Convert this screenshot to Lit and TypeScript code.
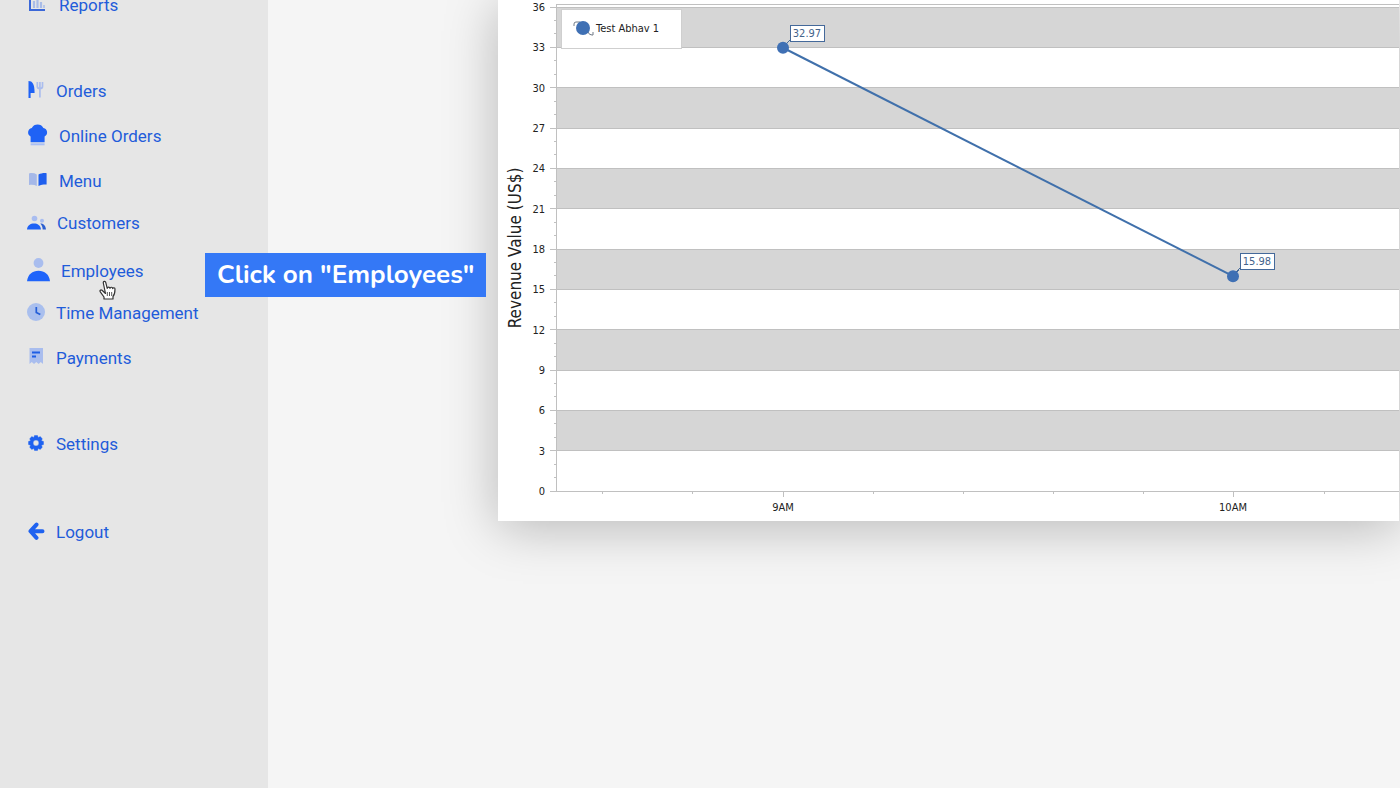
import { LitElement, html, svg, css } from "lit";
import { customElement } from "lit/decorators.js";

const icons: Record<string, unknown> = {
  reports: svg`<svg width="21" height="20" viewBox="0 0 21 20"><path d="M3 0v15h15" fill="none" stroke="#3b68d8" stroke-width="2"/><path d="M7 6v7M10.500 3v10M14 7v6" stroke="#a9bce8" stroke-width="2.200"/><path d="M17 10v3" stroke="#a9bce8" stroke-width="1.500"/></svg>`,
  orders: svg`<svg width="18" height="20" viewBox="0 0 18 20"><path d="M1.500 0C5.500 0 7.600 3 7.600 12H3.600v5H1.500z" fill="#1f62f5"/><path d="M10.300 1v4.500c0 1.300 1 2 2.600 2s2.600-.7 2.600-2V1M12.900 1v15.500" fill="none" stroke="#aabdee" stroke-width="1.700"/></svg>`,
  online: svg`<svg width="21" height="24" viewBox="0 0 21 24"><path d="M3.600 18.300V12.600A4.600 4.600 0 0 1 4.800 4a6.600 6.600 0 0 1 11.600 0 4.600 4.600 0 0 1 1.200 8.600v5.700z" fill="#1f62f5"/><path d="M3.600 19.300h14v2h-14z" fill="#aabff4"/></svg>`,
  menu: svg`<svg width="21" height="18" viewBox="0 0 21 18"><path d="M2 1.500c3-.8 5.500-.3 7.800.9V14C7.500 12.800 5 12.400 2 13z" fill="#a5b8e8"/><path d="M11.500 2.600C14 1.200 17 .8 19.600 1.200v11.300c-3-.1-5.500.3-8.100 1.500z" fill="#1f5fee"/></svg>`,
  customers: svg`<svg width="19" height="18" viewBox="0 0 19 18"><circle cx="7.500" cy="4.500" r="2.800" fill="#a9bdf0"/><circle cx="15" cy="6.800" r="2" fill="#a9bdf0"/><path d="M0 15.500c.3-4.300 3.500-6 7-6s6.500 1.700 7 6z" fill="#1f62f5"/><path d="M13.300 9.600c3 0 5.300 1.800 5.700 5.900h-3.300c-.2-2.800-1-4.300-2.400-5.900z" fill="#2c5fd0"/></svg>`,
  employees: svg`<svg width="23" height="26" viewBox="0 0 23 26"><circle cx="11.500" cy="5" r="4.900" fill="#a9bdee"/><path d="M0 23.300c.8-7 5.500-10.500 11.500-10.500S22.200 16.300 23 23.300z" fill="#1f64fa"/></svg>`,
  time: svg`<svg width="18" height="20" viewBox="0 0 18 20"><circle cx="9" cy="9" r="9" fill="#a9bfee"/><path d="M9.300 4v5.500l4 2" fill="none" stroke="#245ed8" stroke-width="1.700"/></svg>`,
  payments: svg`<svg width="18" height="20" viewBox="0 0 18 20"><path d="M2.500 0h13.500v16l-2.200-2-2.200 2-2.300-2L7 16l-2.200-2-2.300 2z" fill="#a9bdee"/><path d="M5 4.500h8M5 8.500h4" stroke="#1f5ee5" stroke-width="2"/></svg>`,
  settings: svg`<svg width="18" height="20" viewBox="0 0 18 20"><path fill-rule="evenodd" stroke="#1f62f0" stroke-width=".4" stroke-linejoin="round" fill="#1f62f0" d="M7.500 1.500h3l.7 2 2-.9 2.100 2.100-.9 2 2.100.7v3.200l-2.100.7.9 2-2.100 2.100-2-.9-.7 2h-3l-.7-2-2 .9-2.100-2.100.9-2-2.100-.7V7.400l2.100-.7-.9-2 2.100-2.100 2 .9zM9 6.100a2.900 2.900 0 1 0 0 5.800 2.900 2.900 0 0 0 0-5.800z"/></svg>`,
  logout: svg`<svg width="18" height="20" viewBox="0 0 18 20"><path d="M9.500 2.600L3.500 9.200l6 6.600M4 9.200h11.500" fill="none" stroke="#1f62f0" stroke-width="4" stroke-linecap="round" stroke-linejoin="round"/></svg>`,
};

type Item = { id: string; label: string; space: string };
const items: Item[] = [
  { id: "reports", label: "Reports", space: "first" },
  { id: "orders", label: "Orders", space: "section" },
  { id: "online", label: "Online Orders", space: "mid" },
  { id: "menu", label: "Menu", space: "mid" },
  { id: "customers", label: "Customers", space: "tight" },
  { id: "employees", label: "Employees", space: "wide" },
  { id: "time", label: "Time Management", space: "tight" },
  { id: "payments", label: "Payments", space: "mid" },
  { id: "settings", label: "Settings", space: "section" },
  { id: "logout", label: "Logout", space: "last" },
];

@customElement("side-nav")
class SideNav extends LitElement {
  static styles = css`
    :host { display: block; }
    nav { display: flex; flex-direction: column; margin-top: -7px; }
    .row { position: relative; display: flex; height: 24px; padding-left: 27px; }
    .section { margin-top: 62px; }
    .last { margin-top: 64px; }
    .mid { margin-top: 21px; }
    .tight { margin-top: 18px; }
    .wide { margin-top: 24px; }
    a { display: flex; align-items: center; gap: 11px; color: #1f5cda; text-decoration: none; font: 17px/24px Roboto, sans-serif; white-space: nowrap; }
    a svg { display: block; flex: none; }
    .tip { position: absolute; left: 205px; top: -6px; z-index: 2; box-sizing: border-box; height: 44px; padding: 0 12px; background: #3478f6; color: #fff; font: 700 26px/44px Nunito, "Open Sans", sans-serif; white-space: nowrap; }
    .hand { position: absolute; left: 99px; top: 21px; z-index: 2; }
  `;
  render() {
    return html`<nav>${items.map((i) => html`
      <div class="row ${i.space}">
        <a href="#${i.id}">${icons[i.id]}<span>${i.label}</span></a>
        ${i.id === "employees" ? html`
          <div class="tip" role="tooltip">Click on "Employees"</div>
          <svg class="hand" width="18" height="20" viewBox="0 0 18 20"><path d="M6.500 13.500L3 10.300c-1.200-1-2.600.3-1.700 1.500L5 17v2h9v-2.500c1.700-2 2-4 2-7.500 0-1.500-2-1.700-2.300-.3-.1-1.700-2.400-2-2.700-.4-.3-1.500-2.500-1.500-2.800 0L6.800 2.600C6.400.7 4 1.100 4.300 3z" fill="#fff" stroke="#333" stroke-width="1.200" stroke-linejoin="round"/><path d="M8.300 12v4M10.500 12v4M12.700 12v4" stroke="#555"/></svg>` : ""}
      </div>`)}</nav>`;
  }
}

const STEP = 121 / 9 * 3;
const BASE = 491;
const AXIS = 58;
const yOf = (v: number) => BASE - (v / 3) * STEP;
const points = [
  { x: 285, value: 32.97, label: "9AM" },
  { x: 735, value: 15.98, label: "10AM" },
];

@customElement("revenue-chart")
class RevenueChart extends LitElement {
  static styles = css`
    :host { display: block; background: #fff; box-shadow: 0 6px 50px rgba(0, 0, 0, 0.26); }
    .chart { display: block; width: 100%; height: 521px; font-family: Tahoma, "DejaVu Sans Condensed", "DejaVu Sans", sans-serif; }
    .band { fill: #d6d6d6; }
    .line { stroke: #c0c0c0; shape-rendering: crispEdges; }
    .tick { font-size: 11px; fill: #222; }
    .title { font-size: 17px; fill: #222; }
    .series { stroke: #4070ab; stroke-width: 2; }
    .dot { fill: #3f70b4; }
    .box { fill: #fff; stroke: #44699a; shape-rendering: crispEdges; }
    .value { font-size: 11px; fill: #44648c; }
    .legend { fill: #fff; stroke: #cfcfcf; shape-rendering: crispEdges; }
    .mark { fill: none; stroke: #707a86; }
  `;
  render() {
    const majors = Array.from({ length: 13 }, (_, i) => i * 3);
    const minors = Array.from({ length: 37 }, (_, i) => i).filter((i) => i % 3);
    const xMinor = [104, 194, 375, 465, 555, 645, 826];
    return html`<svg class="chart" role="img" aria-label="Revenue Value by hour">
      ${majors.filter((v) => v % 6 === 3).map((v) => svg`<rect class="band" x=${AXIS} y=${Math.round(yOf(v + 3))} width="100%" height=${Math.round(yOf(v)) - Math.round(yOf(v + 3))}></rect>`)}
      <line class="line" x1=${AXIS} x2="100%" y1="4" y2="4"></line>
      <line class="line" x1=${AXIS} x2=${AXIS} y1="4" y2=${BASE}></line>
      ${majors.map((v) => svg`<line class="line" x1="52" x2="100%" y1=${yOf(v)} y2=${yOf(v)}></line>
        <text class="tick" x="47" y=${Math.round(yOf(v)) + 4} text-anchor="end">${v}</text>`)}
      ${minors.map((v) => svg`<line class="line" x1="56" x2=${AXIS} y1=${yOf(v)} y2=${yOf(v)}></line>`)}
      ${xMinor.map((x) => svg`<line class="line" x1=${x} x2=${x} y1=${BASE} y2=${BASE + 3}></line>`)}
      <text class="title" transform="translate(23 248) rotate(-90)" text-anchor="middle">Revenue Value (US$)</text>
      <rect class="legend" x="63" y="9" width="120" height="39"></rect>
      <path class="mark" d="M76 26v-2q0-2 2-2h4M90 32q1 3 4 3h1v-3"></path>
      <circle class="dot" cx="85" cy="28" r="7"></circle>
      <text class="tick" x="98" y="32">Test Abhav 1</text>
      <line class="series" x1=${points[0].x} y1=${yOf(points[0].value)} x2=${points[1].x} y2=${yOf(points[1].value)}></line>
      ${points.map((p) => svg`
        <line class="line" x1=${p.x} x2=${p.x} y1=${BASE} y2=${BASE + 6}></line>
        <text class="tick" x=${p.x} y="511" text-anchor="middle">${p.label}</text>
        <line class="box" x1=${p.x} y1=${yOf(p.value)} x2=${p.x + 7} y2=${yOf(p.value) - 8}></line>
        <circle class="dot" cx=${p.x} cy=${yOf(p.value)} r="6"></circle>
        <rect class="box" x=${p.x + 7} y=${Math.round(yOf(p.value)) - 23} width="34" height="16"></rect>
        <text class="value" x=${p.x + 24} y=${Math.round(yOf(p.value)) - 11} text-anchor="middle">${p.value}</text>`)}
    </svg>`;
  }
}

@customElement("app-root")
class AppRoot extends LitElement {
  static styles = css`
    :host { display: block; }
    .page { display: grid; grid-template-columns: 268px minmax(0, 1fr); height: 100vh; overflow: hidden; background: #f5f5f5; }
    .side { position: relative; z-index: 1; background: #e6e6e6; }
    main { padding: 0 1px 0 230px; }
  `;
  render() {
    return html`<div class="page">
      <side-nav class="side"></side-nav>
      <main><revenue-chart></revenue-chart></main>
    </div>`;
  }
}
